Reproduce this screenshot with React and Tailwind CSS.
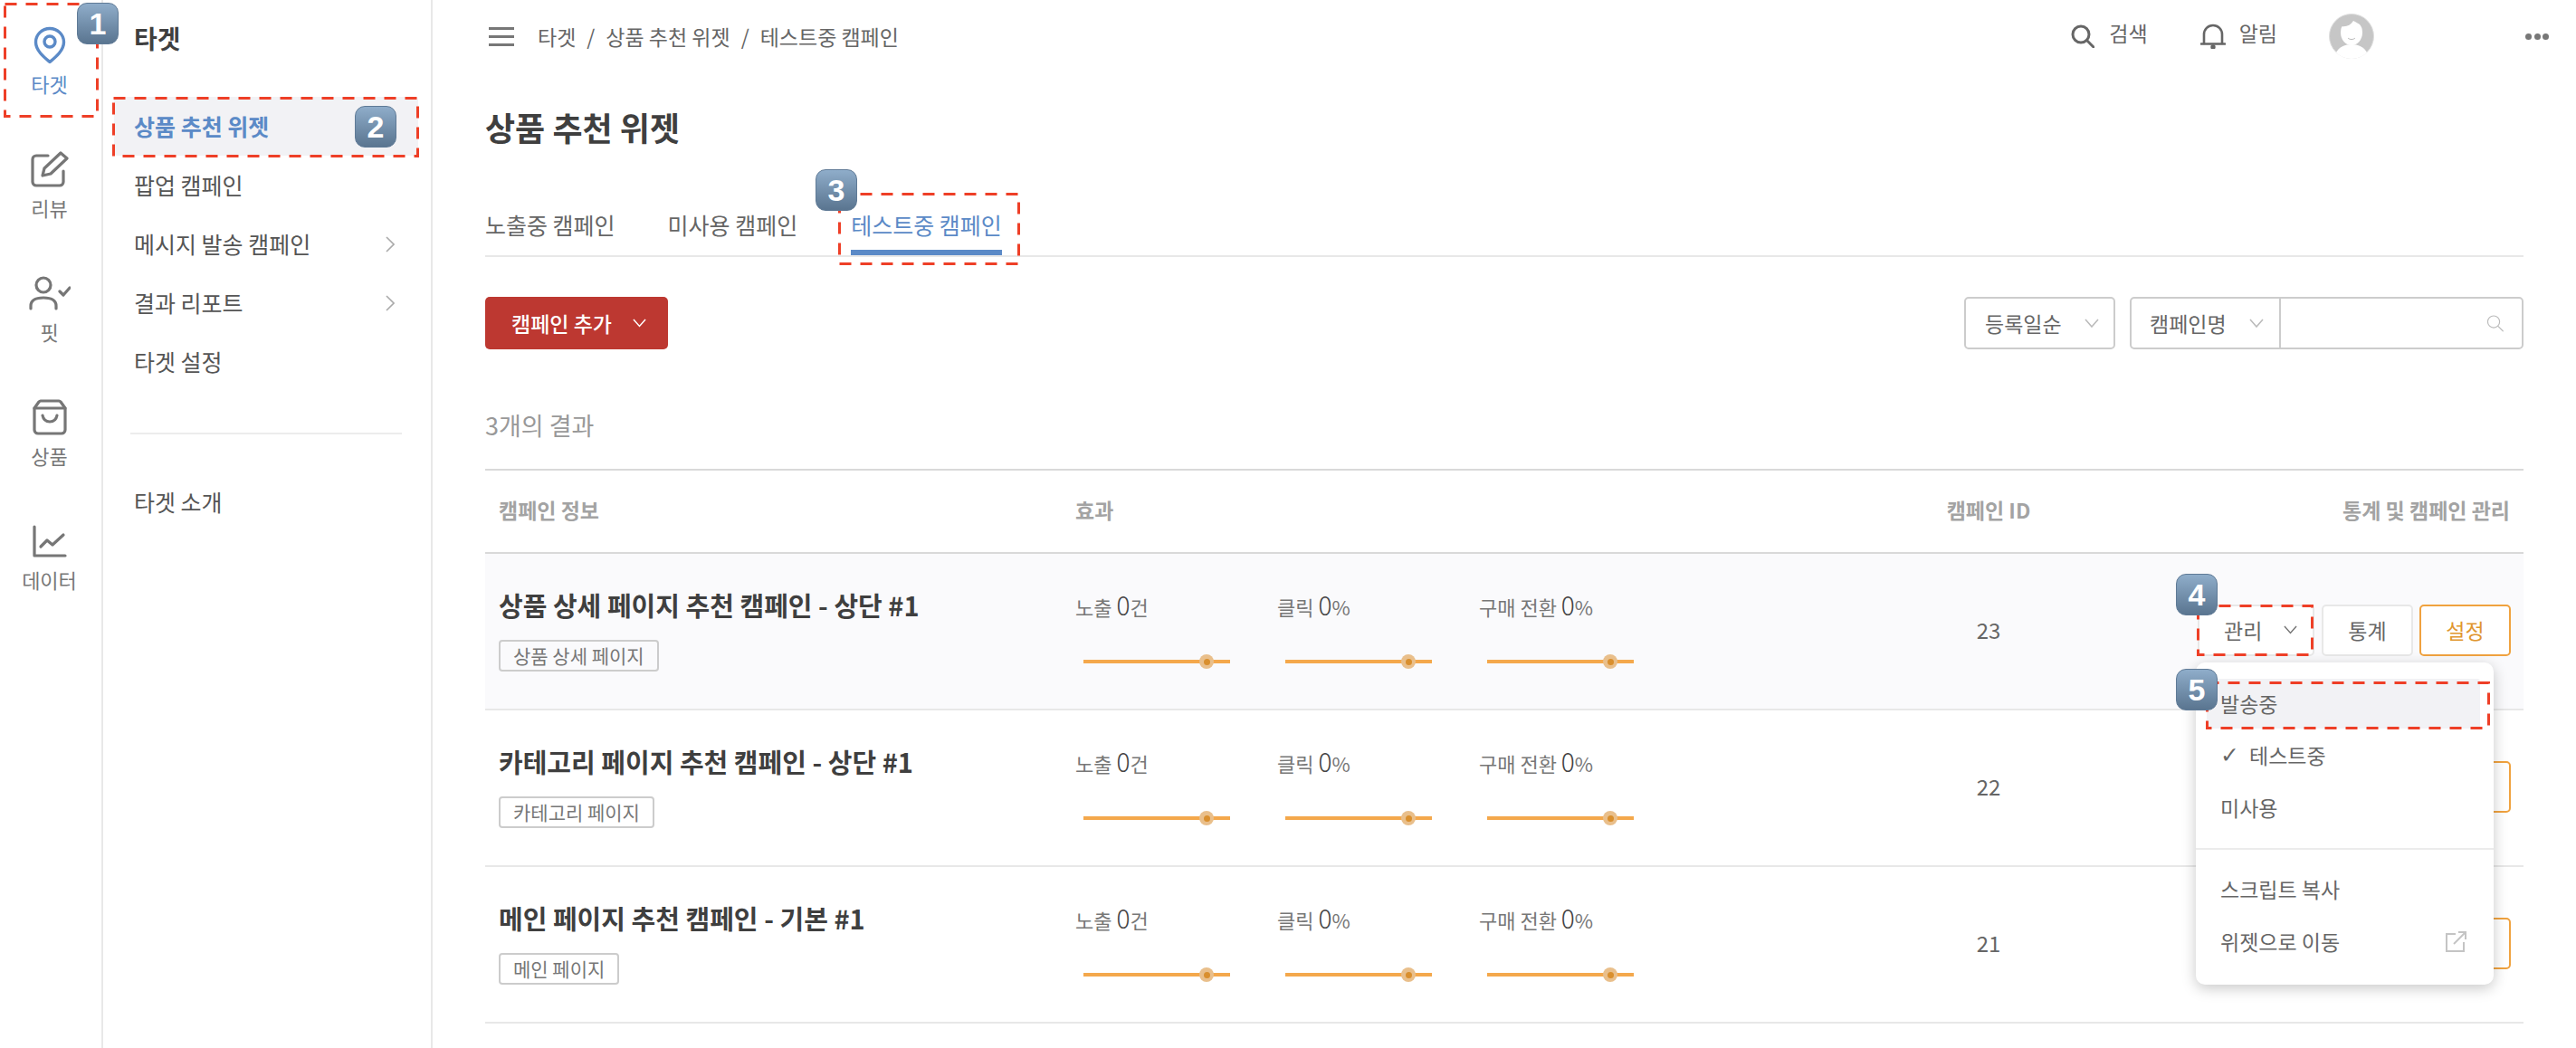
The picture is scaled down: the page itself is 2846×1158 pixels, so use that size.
import React from "react";

const PinIcon = () => (
  <svg width="36" height="42" viewBox="0 0 36 42" fill="none" stroke="#5b8ac7" strokeWidth="3.4">
    <path d="M18 39.5C12 34.5 2.5 27 2.5 17.5a15.5 15 0 0 1 31 0C33.5 27 24 34.5 18 39.5z" strokeLinejoin="round" />
    <circle cx="18" cy="17" r="6" />
  </svg>
);

const ReviewIcon = () => (
  <svg width="42" height="40" viewBox="0 0 42 40" fill="none" stroke="#767676" strokeWidth="3.2" strokeLinecap="round" strokeLinejoin="round">
    <path d="M19 5H6a4 4 0 0 0-4 4v25a4 4 0 0 0 4 4h26a4 4 0 0 0 4-4V22" />
    <path d="M33 2l7 6-18 17-9 2 2-8z" />
  </svg>
);

const FitIcon = () => (
  <svg width="46" height="38" viewBox="0 0 46 38" fill="none" stroke="#767676" strokeWidth="3.2" strokeLinecap="round" strokeLinejoin="round">
    <circle cx="16" cy="10" r="8" />
    <path d="M2 36v-3c0-6 5-9 14-9s14 3 14 9v3" />
    <path d="M34 17l4 4 7-8" />
  </svg>
);

const BagIcon = () => (
  <svg width="38" height="40" viewBox="0 0 38 40" fill="none" stroke="#767676" strokeWidth="3.2" strokeLinecap="round" strokeLinejoin="round">
    <path d="M2 10l5-7a3 3 0 0 1 2-1h20a3 3 0 0 1 2 1l5 7v24a4 4 0 0 1-4 4H6a4 4 0 0 1-4-4z" />
    <path d="M2 10h34" />
    <path d="M11 18c1 5 4 7 8 7s7-2 8-7" />
  </svg>
);

const ChartIcon = () => (
  <svg width="38" height="36" viewBox="0 0 38 36" fill="none" stroke="#767676" strokeWidth="3.2" strokeLinecap="round" strokeLinejoin="round">
    <path d="M2 2v32h34" />
    <path d="M9 24l7-7 6 5 12-11" />
  </svg>
);

const Chevron = ({ color = "#888", size = 16 }) => (
  <svg width={size} height={size * 0.625} viewBox="0 0 16 10" fill="none" stroke={color} strokeWidth="1.6">
    <path d="M1 1l7 8 7-8" />
  </svg>
);

const SideChevron = () => (
  <svg width="10" height="18" viewBox="0 0 10 18" fill="none" stroke="#aaa" strokeWidth="1.6">
    <path d="M1 1l8 8-8 8" />
  </svg>
);

const SearchIcon = ({ w = 26, h = 26, color = "#666", sw = 3 }) => (
  <svg width={w} height={h} viewBox="0 0 26 26" fill="none" stroke={color} strokeWidth={sw} strokeLinecap="round">
    <circle cx="11" cy="11" r="9" />
    <path d="M17.5 17.5L25 25" />
  </svg>
);

const BellIcon = () => (
  <svg width="28" height="28" viewBox="0 0 28 28" fill="none" stroke="#666" strokeWidth="2.6" strokeLinecap="round">
    <path d="M4 22V12a10 10 0 0 1 20 0v10" />
    <path d="M1 22.5h26" />
    <circle cx="14" cy="26" r="1.4" fill="#666" />
  </svg>
);

const Avatar = () => (
  <svg width="50" height="50" viewBox="0 0 50 50">
    <circle cx="25" cy="25" r="24.5" fill="#c6c6c6" stroke="#dedede" strokeWidth="1" />
    <ellipse cx="25" cy="21" rx="12" ry="14" fill="#fff" />
    <path d="M8 43c3-6 10-9 17-9s14 3 17 9c-4 4-10 7-17 7s-13-3-17-7z" fill="#fff" />
    <path d="M21 27c2 2 6 2 8 0" fill="none" stroke="#bbb" strokeWidth="1" />
    <path d="M14 14c5 1 10-1 13-6 3 2 7 3 9 6-2-8-7-10-11-10S15 7 14 14z" fill="#c6c6c6" />
  </svg>
);

const ExternalIcon = () => (
  <svg width="23" height="23" viewBox="0 0 23 23" fill="none" stroke="#c4c4c4" strokeWidth="2">
    <path d="M11 3H1v19h19V12" />
    <path d="M9 14L21 2" />
    <path d="M14 1h8v8" />
  </svg>
);

// 빨간 점선 박스
const Dash = ({ w, h, className }) => (
  <svg width={w} height={h} className={`absolute pointer-events-none ${className}`} fill="none">
    <rect x="1.5" y="1.5" width={w - 3} height={h - 3} stroke="#ee3f27" strokeWidth="3" strokeDasharray="13 10" />
  </svg>
);

const Badge = ({ n, className }) => (
  <div
    className={`absolute z-30 flex h-[46px] w-[46px] items-center justify-center rounded-[11px] border border-[#5f7a96] bg-gradient-to-b from-[#8fadca] to-[#5a7590] font-['Liberation_Sans',sans-serif] text-[34px] font-bold text-white ${className}`}
  >
    {n}
  </div>
);

const railItems = [
  { label: "타겟", icon: <PinIcon />, active: true },
  { label: "리뷰", icon: <ReviewIcon /> },
  { label: "핏", icon: <FitIcon /> },
  { label: "상품", icon: <BagIcon /> },
  { label: "데이터", icon: <ChartIcon /> },
];

const menuItems = [
  { label: "상품 추천 위젯", active: true },
  { label: "팝업 캠페인" },
  { label: "메시지 발송 캠페인", arrow: true },
  { label: "결과 리포트", arrow: true },
  { label: "타겟 설정" },
];

const campaigns = [
  { title: "상품 상세 페이지 추천 캠페인 - 상단 #1", tag: "상품 상세 페이지", id: 23 },
  { title: "카테고리 페이지 추천 캠페인 - 상단 #1", tag: "카테고리 페이지", id: 22 },
  { title: "메인 페이지 추천 캠페인 - 기본 #1", tag: "메인 페이지", id: 21 },
];

const metrics = [
  { label: "노출", unit: "건" },
  { label: "클릭", unit: "%" },
  { label: "구매 전환", unit: "%" },
];

const Metric = ({ label, unit }) => (
  <div className="w-[223px]">
    <div className="text-[22px] leading-[32px] text-[#777] whitespace-nowrap">
      {label} <span className="text-[28px] font-light text-[#444]">0</span>
      {unit}
    </div>
    <div className="relative ml-[9px] mt-[37px] flex h-[16px] w-[162px] items-center">
      <div className="h-[4px] w-full bg-[#f4a84c]" />
      <div className="absolute left-[128px] top-0 flex h-[16px] w-[16px] items-center justify-center rounded-full bg-[#e9bf8b]">
        <div className="h-[7px] w-[7px] rounded-full bg-[#d98f2e]" />
      </div>
    </div>
  </div>
);

const Dropdown = () => (
  <div className="absolute left-[-2px] top-[64px] z-20 h-[356px] w-[329px] rounded-[10px] bg-white pt-[18px] text-[23px] text-[#666] shadow-[0_4px_16px_rgba(0,0,0,0.22)]">
    <div className="ml-[12px] flex h-[55px] w-[302px] items-center rounded-[3px] bg-[#f2f2f5] pl-[15px]">발송중</div>
    <div className="mt-[1px] flex h-[58px] items-center pl-[27px]">
      <span className="w-[32px] font-['DejaVu_Sans',sans-serif] text-[25px] font-bold leading-none">✓</span>
      테스트중
    </div>
    <div className="flex h-[58px] items-center pl-[27px]">미사용</div>
    <div className="mt-[15px] border-t-2 border-[#ececec]" />
    <div className="mt-[15px] flex h-[58px] items-center pl-[27px]">스크립트 복사</div>
    <div className="flex h-[58px] items-center justify-between pl-[27px] pr-[30px]">
      위젯으로 이동
      <ExternalIcon />
    </div>
  </div>
);

const Row = ({ item, first }) => (
  <div
    className={`grid h-[173px] grid-cols-[652px_919px_180px_1fr] border-b-2 border-[#e8e8e8] ${first ? "bg-[#fafafc]" : "bg-white"}`}
  >
    <div className="pl-[15px] pt-[40px]">
      <div className="text-[29px] font-bold leading-[32px] text-[#3f3f3f] whitespace-nowrap">{item.title}</div>
      <div className="mt-[23px] inline-flex h-[35px] items-center rounded-[4px] border-2 border-[#ccc] px-[14px] text-[21px] text-[#777]">
        {item.tag}
      </div>
    </div>
    <div className="flex pt-[40px]">
      {metrics.map((m) => (
        <Metric key={m.label} {...m} />
      ))}
    </div>
    <div className="flex items-center justify-center pb-[3px] text-[24px] text-[#666]">{item.id}</div>
    <div className="flex items-center justify-end pb-[3px] pr-[14px]">
      {/* 2, 3행 버튼은 드롭다운에 가려지므로 글자는 첫 행만 */}
      <div className="relative flex items-center text-[23px]">
        <div className="flex h-[57px] w-[129px] items-center rounded-[5px] border-2 border-[#e8e8e8] bg-white pl-[27px] text-[#666]">
          {first && "관리"}
          {first && (
            <span className="ml-[24px]">
              <Chevron color="#777" size={15} />
            </span>
          )}
        </div>
        <div className="ml-[8px] flex h-[57px] w-[101px] items-center justify-center rounded-[5px] border-2 border-[#e8e8e8] bg-white text-[#666]">
          {first && "통계"}
        </div>
        <div className="ml-[7px] flex h-[57px] w-[101px] items-center justify-center rounded-[5px] border-2 border-[#f0a23f] bg-white text-[#e0962f]">
          {first && "설정"}
        </div>
        {first && <Dropdown />}
      </div>
    </div>
  </div>
);

const App = () => {
  return (
    <div className="relative flex h-screen w-full overflow-hidden bg-white font-['Noto_Sans_CJK_KR','Noto_Sans',sans-serif]">
      {/* 아이콘 레일 */}
      <div className="w-[114px] shrink-0 border-r-2 border-[#e8e8e8] pr-[3px]">
        {railItems.map((r) => (
          <div key={r.label} className="flex h-[137px] flex-col items-center pt-[26px]">
            <div className="flex h-[48px] items-center justify-center">{r.icon}</div>
            <div className={`mt-[4px] text-[22px] leading-[28px] ${r.active ? "text-[#5b8ac7]" : "text-[#777]"}`}>{r.label}</div>
          </div>
        ))}
      </div>

      {/* 서브 메뉴 */}
      <div className="w-[364px] shrink-0 border-r-2 border-[#e8e8e8]">
        <div className="h-[107px] pl-[34px] pt-[26px] text-[28px] font-bold leading-[32px] text-[#3f3f3f]">타겟</div>
        <div className="pl-[12px] pr-[14px]">
          {menuItems.map((m) => (
            <div
              key={m.label}
              className={`flex h-[65px] items-center justify-between rounded-[4px] pl-[22px] pr-[26px] text-[25px] ${
                m.active ? "bg-[#f2f2f5] font-bold text-[#5b8ac7]" : "text-[#555]"
              }`}
            >
              {m.label}
              {m.arrow && <SideChevron />}
            </div>
          ))}
          <div className="ml-[18px] mt-[46px] w-[300px] border-t-2 border-[#ececec]" />
          <div className="mt-[42px] flex h-[65px] items-center pl-[22px] text-[25px] text-[#555]">타겟 소개</div>
        </div>
      </div>

      {/* 본문 */}
      <div className="min-w-0 flex-1">
        <div className="flex h-[80px] items-center pl-[62px] pr-[30px]">
          <div className="flex w-[28px] flex-col gap-[6px]">
            <div className="h-[3px] bg-[#777]" />
            <div className="h-[3px] bg-[#777]" />
            <div className="h-[3px] bg-[#777]" />
          </div>
          <div className="ml-[26px] flex gap-[12px] text-[23px] text-[#666]">
            <span>타겟</span>
            <span>/</span>
            <span>상품 추천 위젯</span>
            <span>/</span>
            <span>테스트중 캠페인</span>
          </div>
          <div className="ml-auto flex items-center text-[23px] text-[#666]">
            <SearchIcon />
            <span className="ml-[16px] -mt-[8px]">검색</span>
            <span className="ml-[58px]">
              <BellIcon />
            </span>
            <span className="ml-[15px] -mt-[8px]">알림</span>
            <span className="ml-[57px]">
              <Avatar />
            </span>
            <div className="ml-[167px] flex w-[26px] justify-between">
              <div className="h-[7px] w-[7px] rounded-full bg-[#777]" />
              <div className="h-[7px] w-[7px] rounded-full bg-[#777]" />
              <div className="h-[7px] w-[7px] rounded-full bg-[#777]" />
            </div>
          </div>
        </div>

        <div className="px-[58px]">
          <h1 className="mt-[38px] text-[36px] font-bold leading-[44px] text-[#3f3f3f]">상품 추천 위젯</h1>

          <div className="flex gap-[58px] border-b-2 border-[#e8e8e8] pt-[68px] text-[25px]">
            <div className="h-[52px] leading-[36px] text-[#666]">노출중 캠페인</div>
            <div className="h-[52px] leading-[36px] text-[#666]">미사용 캠페인</div>
            <div className="ml-[1px] h-[52px] border-b-[6px] border-[#5b8ac7] leading-[36px] text-[#5b8ac7]">테스트중 캠페인</div>
          </div>

          <div className="mt-[44px] flex h-[58px] items-center justify-between">
            <div className="flex h-full w-[202px] items-center rounded-[5px] bg-[#bd3831] pl-[29px] text-[23px] font-medium text-white">
              캠페인 추가
              <span className="ml-[23px]">
                <Chevron color="#fff" size={15} />
              </span>
            </div>
            <div className="flex h-full items-center text-[23px] text-[#666]">
              <div className="flex h-full w-[167px] items-center rounded-[5px] border-2 border-[#ccc] pl-[21px]">
                등록일순
                <span className="ml-[25px]">
                  <Chevron color="#bbb" />
                </span>
              </div>
              <div className="ml-[16px] flex h-full w-[435px] items-center rounded-[5px] border-2 border-[#ccc]">
                <div className="flex h-full w-[165px] items-center border-r-2 border-[#ccc] pl-[20px]">
                  캠페인명
                  <span className="ml-[25px]">
                    <Chevron color="#bbb" />
                  </span>
                </div>
                <span className="ml-auto mr-[20px]">
                  <SearchIcon w={19} h={22} color="#bbb" sw={1.6} />
                </span>
              </div>
            </div>
          </div>

          <div className="mt-[64px] text-[27px] leading-[40px] text-[#999]">3개의 결과</div>

          <div className="mt-[28px] grid h-[94px] grid-cols-[652px_919px_180px_1fr] items-center border-y-2 border-[#d9d9d9] pb-[3px] text-[23px] font-bold text-[#a3a3a3]">
            <div className="pl-[15px]">캠페인 정보</div>
            <div>효과</div>
            <div className="text-center">캠페인 ID</div>
            <div className="pr-[15px] text-right">통계 및 캠페인 관리</div>
          </div>

          {campaigns.map((c, i) => (
            <Row key={c.id} item={c} first={i === 0} />
          ))}
        </div>
      </div>

      {/* 안내 표시 */}
      <Dash w={105} h={127} className="left-[4px] top-[3px] z-30" />
      <Dash w={339} h={67} className="left-[124px] top-[107px] z-30" />
      <Dash w={201} h={80} className="left-[926px] top-[213px] z-30" />
      <Dash w={129} h={57} className="left-[2427px] top-[668px] z-30" />
      <Dash w={314} h={53} className="left-[2437px] top-[753px] z-30" />
      <Badge n="1" className="left-[85px] top-[3px]" />
      <Badge n="2" className="left-[392px] top-[117px]" />
      <Badge n="3" className="left-[901px] top-[187px]" />
      <Badge n="4" className="left-[2404px] top-[634px]" />
      <Badge n="5" className="left-[2404px] top-[739px]" />
    </div>
  );
};

export default App;
